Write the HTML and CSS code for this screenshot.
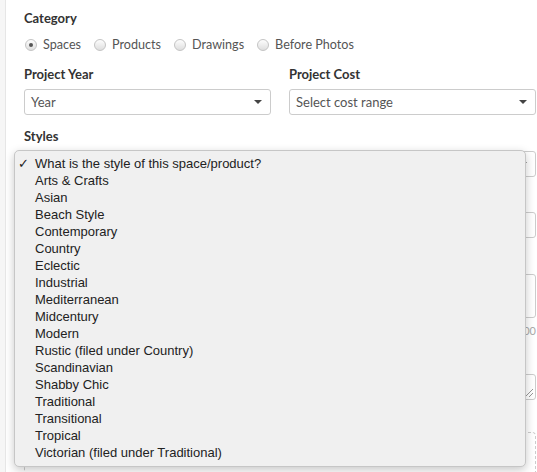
FILE: index.html
```html
<!DOCTYPE html>
<html>
<head>
    <title>Add project photo</title>
    <meta charset="utf-8" />
    <link rel="stylesheet" href="styles.css">
</head>
<body>
    <div class="panel">
        <form class="photo-form">
            <div class="field category-field">
                <label class="field-label">Category</label>
                <div class="radios">
                    <label class="radio"><span class="radio-dot checked"></span>Spaces</label>
                    <label class="radio"><span class="radio-dot"></span>Products</label>
                    <label class="radio"><span class="radio-dot"></span>Drawings</label>
                    <label class="radio"><span class="radio-dot"></span>Before Photos</label>
                </div>
            </div>

            <div class="field-row">
                <div class="field">
                    <label class="field-label">Project Year</label>
                    <div class="select"><span>Year</span><i class="caret"></i></div>
                </div>
                <div class="field">
                    <label class="field-label">Project Cost</label>
                    <div class="select"><span>Select cost range</span><i class="caret"></i></div>
                </div>
            </div>

            <div class="field styles-field">
                <label class="field-label">Styles</label>
                <div class="select"><span></span><i class="caret"></i></div>

                <ul class="menu">
                    <li class="selected">What is the style of this space/product?</li>
                    <li>Arts &amp; Crafts</li>
                    <li>Asian</li>
                    <li>Beach Style</li>
                    <li>Contemporary</li>
                    <li>Country</li>
                    <li>Eclectic</li>
                    <li>Industrial</li>
                    <li>Mediterranean</li>
                    <li>Midcentury</li>
                    <li>Modern</li>
                    <li>Rustic (filed under Country)</li>
                    <li>Scandinavian</li>
                    <li>Shabby Chic</li>
                    <li>Traditional</li>
                    <li>Transitional</li>
                    <li>Tropical</li>
                    <li>Victorian (filed under Traditional)</li>
                </ul>
            </div>

            <!-- fields below sit under the open list -->
            <div class="input title-input"></div>

            <div class="textarea tall"></div>
            <div class="counter">500</div>

            <div class="textarea keywords"><i class="grip"></i></div>

            <div class="dropzone"></div>
        </form>
    </div>
</body>
</html>
```

FILE: styles.css
```css
body {
    margin: 0;
    background: #f6f6f6;
    font-family: Lato, "Liberation Sans", sans-serif;
    font-size: 13px;
    color: #333333;
}

.panel {
    margin-left: 5px;
    height: 472px;
    overflow: hidden;
    background: #ffffff;
    border-left: 1px solid #e6e6e6;
}

.photo-form {
    padding: 10px 0 0 18px;
    width: 512px;
}

.field {
    margin-bottom: 13px;
}

.category-field {
    margin-bottom: 12px;
}

.field-label {
    display: block;
    font-weight: bold;
    line-height: 16px;
    color: #333333;
    margin-bottom: 7px;
}

.radios {
    display: flex;
    gap: 12px;
    line-height: 18px;
    color: #555555;
    margin-top: 10px;
    font-size: 12.6px;
}

.radio {
    display: flex;
    align-items: center;
}

.radio-dot {
    width: 10px;
    height: 10px;
    margin: 0 6px 0 1px;
    border: 1px solid #c4c4c4;
    border-radius: 50%;
    background: linear-gradient(#fdfdfd, #dedede);
    position: relative;
}

.radio-dot.checked::after {
    content: "";
    position: absolute;
    left: 3px;
    top: 3px;
    width: 4px;
    height: 4px;
    border-radius: 50%;
    background: #555555;
}

.field-row {
    display: grid;
    grid-template-columns: 1fr 1fr;
    gap: 18px;
}

.select,
.input,
.textarea {
    box-sizing: border-box;
    height: 26px;
    border: 1px solid #cccccc;
    border-radius: 3px;
    background: #ffffff;
}

.select {
    display: flex;
    align-items: center;
    justify-content: space-between;
    padding: 0 8px 0 6px;
    color: #555555;
}

.caret {
    width: 0;
    height: 0;
    border-left: 4px solid transparent;
    border-right: 4px solid transparent;
    border-top: 4px solid #444444;
}

.styles-field {
    position: relative;
    z-index: 2;
    margin-bottom: 35px;
}

.textarea {
    position: relative;
}

.textarea.tall {
    height: 44px;
    margin-top: 36px;
}

.counter {
    text-align: right;
    font-size: 11px;
    line-height: 14px;
    margin-top: 6px;
    color: #aaaaaa;
}

.keywords {
    margin-top: 36px;
}

.grip {
    position: absolute;
    right: 2px;
    bottom: 2px;
    width: 8px;
    height: 8px;
    background: linear-gradient(135deg, transparent 45%, #999999 45%, #999999 55%, transparent 55%, transparent 70%, #999999 70%, #999999 80%, transparent 80%);
}

.dropzone {
    height: 60px;
    border: 1px dashed #cccccc;
    border-radius: 4px;
    margin-top: 32px;
}

/* the open native list for the Styles select */
.menu {
    position: absolute;
    left: -10px;
    top: 22px;
    width: 512px;
    box-sizing: border-box;
    margin: 0;
    padding: 4px 0 5px;
    list-style: none;
    background: #f0f0f0;
    border: 1px solid #c6c6c6;
    border-radius: 5px;
    box-shadow: 0 3px 10px rgba(0, 0, 0, 0.22);
    font-family: "Liberation Sans", Arial, sans-serif;
    font-size: 13px;
    line-height: 17px;
    color: #222222;
}

.menu li {
    padding-left: 20px;
    position: relative;
}

.menu li.selected::before {
    content: "\2713";
    position: absolute;
    left: 3px;
    top: 0;
    font-family: "DejaVu Sans", sans-serif;
    font-size: 13px;
    font-weight: bold;
    color: #222222;
}
```
